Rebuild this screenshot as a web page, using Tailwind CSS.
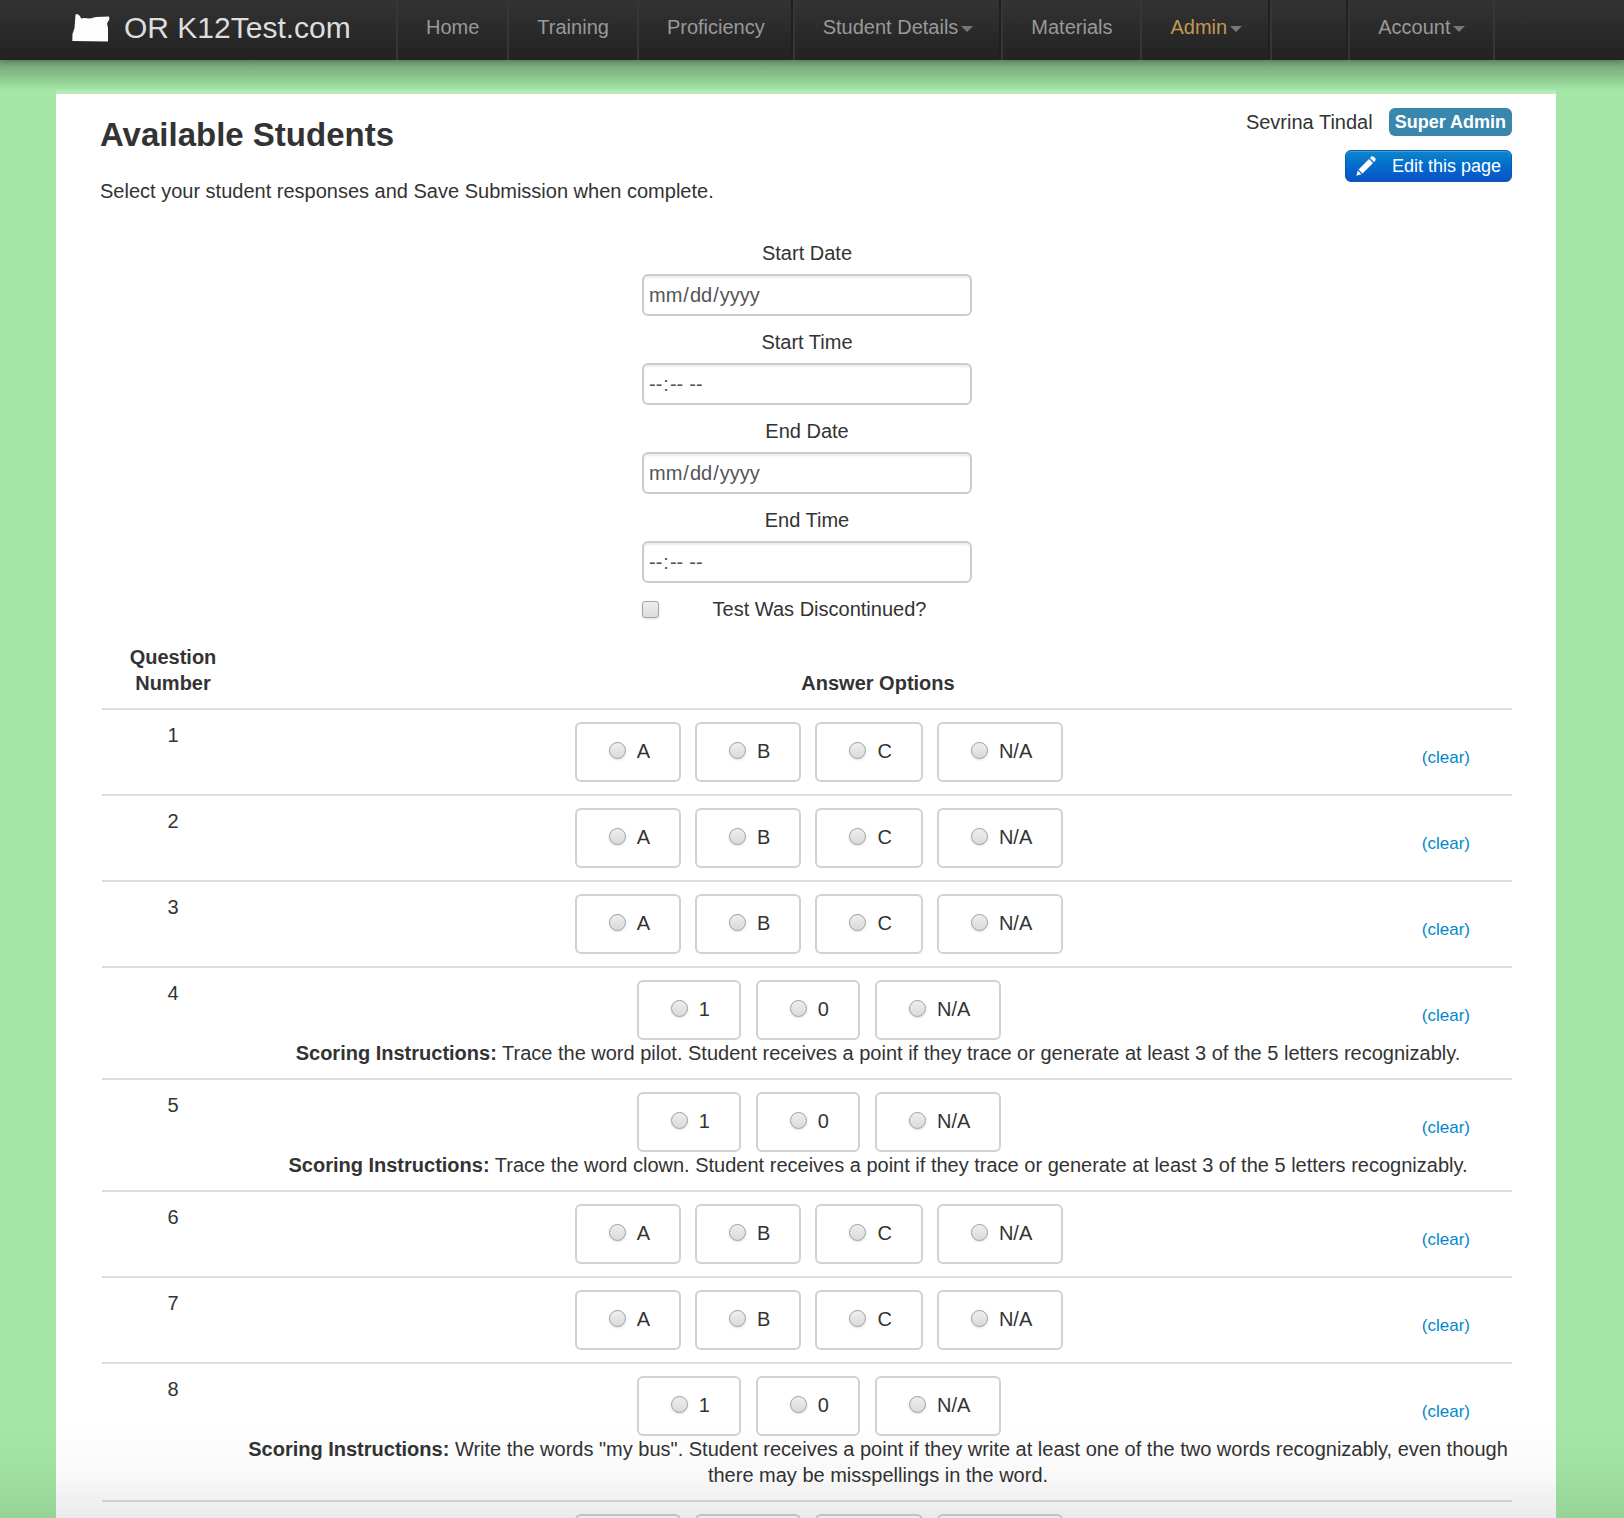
<!DOCTYPE html>
<html lang="en">
<head>
<meta charset="utf-8">
<title>Available Students</title>
<script src="https://cdn.jsdelivr.net/npm/@tailwindcss/browser@4"></script>
</head>
<body class="h-screen overflow-hidden bg-[#a3e6a5] font-['Liberation_Sans',Arial,sans-serif] text-[20px] leading-[26px] text-[#333]">

<header class="relative z-10 flex h-[60px] bg-linear-to-b from-[#333] to-[#222] shadow-[0_1px_6px_rgba(0,0,0,0.25)]">
  <a href="#" class="flex w-[396px] shrink-0 items-start gap-3.5 pt-3 pl-[72px] text-[30px] leading-[32px] text-[#ddd]">
    <svg class="mt-0.5 h-7 w-[38px]" viewBox="0 0 38 28" fill="#fbfdff" aria-hidden="true"><path d="M3.5 0.5 L5.5 0 L8 2 L9 4.5 L12 4 L18 4.5 L24 3 L37 2.5 L37.5 5 L35 9.5 L36 14 L36 27.5 L0.3 27 L0.5 20 L2.5 14 Z"/></svg>
    <span>OR K12Test.com</span>
  </a>
  <nav aria-label="Main">
    <ul class="flex h-[60px] whitespace-nowrap text-[#999]">
      <li class="border-l-2 border-[#363636] px-7 pt-3.5"><a href="#">Home</a></li>
      <li class="border-l-2 border-[#363636] px-7 pt-3.5"><a href="#">Training</a></li>
      <li class="border-l-2 border-[#363636] px-7 pt-3.5"><a href="#">Proficiency</a></li>
      <li class="border-l-2 border-[#363636] px-7 pt-3.5 shadow-[-2px_0_0_#202020]"><a href="#" class="flex items-center gap-[3px]">Student Details<svg class="mt-1 h-1.5 w-3" viewBox="0 0 12 6" fill="#777" aria-hidden="true"><path d="M0 0H12L6 6Z"/></svg></a></li>
      <li class="border-l-2 border-[#363636] px-7 pt-3.5 shadow-[-2px_0_0_#202020]"><a href="#">Materials</a></li>
      <li class="border-l-2 border-[#363636] px-7 pt-3.5"><a href="#" class="flex items-center gap-[3px] text-[#c09853]">Admin<svg class="mt-1 h-1.5 w-3" viewBox="0 0 12 6" fill="#777" aria-hidden="true"><path d="M0 0H12L6 6Z"/></svg></a></li>
      <li class="w-[78px] border-l-2 border-[#363636] shadow-[-2px_0_0_#202020]"></li>
      <li class="border-x-2 border-[#363636] px-7 pt-3.5 shadow-[-2px_0_0_#202020]"><a href="#" class="flex items-center gap-[3px]">Account<svg class="mt-1 h-1.5 w-3" viewBox="0 0 12 6" fill="#777" aria-hidden="true"><path d="M0 0H12L6 6Z"/></svg></a></li>
    </ul>
  </nav>
</header>
<div class="h-[30px] bg-linear-to-b from-black/32 to-transparent"></div>

<div class="pr-[68px] pl-14">
<main class="border-t-4 border-white/20 bg-white bg-clip-padding px-11 pb-10">
  <div class="flex items-start justify-between pt-3.5">
    <div class="pt-[7px]">
      <h1 class="text-[33px] leading-[40px] font-bold">Available Students</h1>
      <p class="mt-[23px]">Select your student responses and Save Submission when complete.</p>
    </div>
    <div class="flex flex-col items-end gap-3.5">
      <div class="flex items-center gap-4">
        <span>Sevrina Tindal</span>
        <span class="rounded-md bg-[#3a87ad] px-1.5 text-[18px] leading-[28px] font-bold text-white">Super Admin</span>
      </div>
      <button type="button" class="flex h-8 items-center gap-4 rounded-md border border-[#0a58b0] bg-linear-to-b from-[#0e86cc] to-[#0b50c8] px-2.5 text-[18px] text-white shadow-[inset_0_1px_0_rgba(255,255,255,0.2)]">
        <svg class="h-5 w-5" viewBox="0 0 20 20" fill="#fff" aria-hidden="true"><path d="M15 0.8 Q16.5 -0.4 18 1 L19.2 2.3 Q20.2 3.6 19 5 L18 6 L14 2Z M13 3 L17 7 L6.5 17.5 L2.5 13.5Z M1.8 14.5 L5.5 18.2 L0.3 19.8Z"/></svg>
        Edit this page
      </button>
    </div>
  </div>

  <div class="mt-9 pl-0.5">
  <form class="mx-auto flex w-[330px] flex-col gap-[13px]">
    <div class="flex flex-col gap-2">
      <label for="sd" class="text-center">Start Date</label>
      <input id="sd" type="date" class="h-[42px] rounded-md border-2 border-[#ccc] px-1 text-[#555] shadow-[inset_0_2px_2px_rgba(0,0,0,0.075)] [&::-webkit-calendar-picker-indicator]:hidden">
    </div>
    <div class="flex flex-col gap-2">
      <label for="st" class="text-center">Start Time</label>
      <input id="st" type="time" class="h-[42px] rounded-md border-2 border-[#ccc] px-1 text-[#555] shadow-[inset_0_2px_2px_rgba(0,0,0,0.075)] [&::-webkit-calendar-picker-indicator]:hidden">
    </div>
    <div class="flex flex-col gap-2">
      <label for="ed" class="text-center">End Date</label>
      <input id="ed" type="date" class="h-[42px] rounded-md border-2 border-[#ccc] px-1 text-[#555] shadow-[inset_0_2px_2px_rgba(0,0,0,0.075)] [&::-webkit-calendar-picker-indicator]:hidden">
    </div>
    <div class="flex flex-col gap-2">
      <label for="et" class="text-center">End Time</label>
      <input id="et" type="time" class="h-[42px] rounded-md border-2 border-[#ccc] px-1 text-[#555] shadow-[inset_0_2px_2px_rgba(0,0,0,0.075)] [&::-webkit-calendar-picker-indicator]:hidden">
    </div>
    <div class="flex items-center">
      <input id="disc" type="checkbox" class="h-[17px] w-[17px] appearance-none rounded-[3px] border border-[#a5a5a5] bg-linear-to-b from-[#eee] to-[#dcdcdc] shadow-sm">
      <label for="disc" class="flex-1 pl-2 text-center">Test Was Discontinued?</label>
    </div>
  </form>
  </div>

  <div class="mt-2.5 pl-0.5">
  <table class="w-full table-fixed border-collapse text-center">
    <thead>
      <tr>
        <th scope="col" class="w-[142px] px-5 py-3 font-bold">Question Number</th>
        <th scope="col" class="py-3 align-bottom font-bold">Answer Options</th>
      </tr>
    </thead>
    <tbody id="rows"></tbody>
  </table>
  </div>
</main>
</div>

<div class="pointer-events-none fixed inset-x-0 bottom-0 h-24 bg-linear-to-b from-transparent via-black/2 to-black/8"></div>

<script>
const abc = ['A', 'B', 'C', 'N/A'], score = ['1', '0', 'N/A'];
const questions = [
  [abc], [abc], [abc],
  [score, 'Trace the word pilot. Student receives a point if they trace or generate at least 3 of the 5 letters recognizably.'],
  [score, 'Trace the word clown. Student receives a point if they trace or generate at least 3 of the 5 letters recognizably.'],
  [abc], [abc],
  [score, 'Write the words "my bus". Student receives a point if they write at least one of the two words recognizably, even though there may be misspellings in the word.'],
  [abc]
];
document.getElementById('rows').innerHTML = questions.map(([options, note], i) => `
  <tr class="border-t-2 border-[#ddd]">
    <td class="py-3 align-top">${i + 1}</td>
    <td class="py-3 align-top">
      <div class="flex px-3">
        <div class="flex flex-1 justify-center ${options === abc ? 'gap-3.5' : 'gap-[15px]'}">
          ${options.map(o => `<label class="flex h-[60px] items-start gap-[11px] rounded-md border-2 border-[#d2d2d2] pt-3.5 pr-[29px] pl-8"><input type="radio" name="q${i + 1}" value="${o}" class="mt-1 h-[17px] w-[17px] appearance-none rounded-full border border-[#a0a0a0] bg-linear-to-b from-[#eee] to-[#dadada] shadow-sm">${o}</label>`).join('')}
        </div>
        <div class="flex w-[118px] items-center justify-end pt-3 pr-[30px] text-[17px]"><a href="#" class="text-[#0088cc]">(clear)</a></div>
      </div>
      ${note ? `<p><strong>Scoring Instructions:</strong> ${note}</p>` : ''}
    </td>
  </tr>`).join('');
</script>
</body>
</html>
